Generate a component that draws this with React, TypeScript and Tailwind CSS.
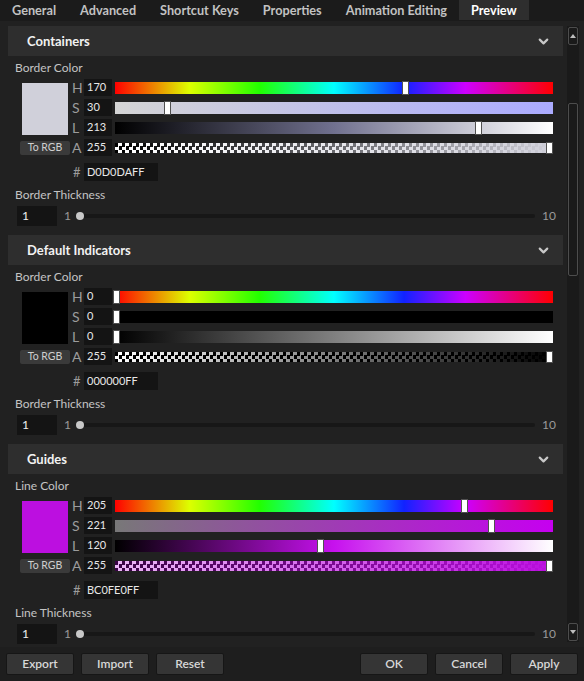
import { ChevronDown } from 'lucide-react'

type Pick = {
  h: number
  s: number
  l: number
  a: number
  hex: string
  rgb: [number, number, number]
  alphaFrom: number
}

type Section = {
  title: string
  colorLabel: string
  thicknessLabel: string
  color: Pick
}

const tabs = ['General', 'Advanced', 'Shortcut Keys', 'Properties', 'Animation Editing', 'Preview']

const sections: Section[] = [
  {
    title: 'Containers',
    colorLabel: 'Border Color',
    thicknessLabel: 'Border Thickness',
    color: { h: 170, s: 30, l: 213, a: 255, hex: 'D0D0DAFF', rgb: [208, 208, 218], alphaFrom: 0 },
  },
  {
    title: 'Default Indicators',
    colorLabel: 'Border Color',
    thicknessLabel: 'Border Thickness',
    color: { h: 0, s: 0, l: 0, a: 255, hex: '000000FF', rgb: [0, 0, 0], alphaFrom: 0 },
  },
  {
    title: 'Guides',
    colorLabel: 'Line Color',
    thicknessLabel: 'Line Thickness',
    color: { h: 205, s: 221, l: 120, a: 255, hex: 'BC0FE0FF', rgb: [188, 15, 224], alphaFrom: 0.3 },
  },
]

const deg = (v: number) => (v / 255) * 360
const pct = (v: number) => (v / 255) * 100

function Slider({ bg, value, alpha }: { bg: string; value: number; alpha?: boolean }) {
  return (
    <div className={alpha ? 'relative ml-[3px] h-[10px] flex-1' : 'relative ml-[3px] h-[12px] flex-1'}>
      {alpha ? (
        <div className="h-full w-full bg-[image:conic-gradient(#fff_25%,#000_0_50%,#fff_0_75%,#000_0)] bg-[length:7px_7px]">
          <div className="h-full w-full" style={{ background: bg }} />
        </div>
      ) : (
        <div className="h-full w-full" style={{ background: bg }} />
      )}
      <div
        className="absolute top-[-1px] bottom-[-1px] w-[7px] border border-[#505050] bg-white"
        style={{ left: `calc(-2px + ${value / 255} * (100% - 5px))` }}
      />
    </div>
  )
}

function Row({ letter, value, children }: { letter: string; value: number; children: React.ReactNode }) {
  return (
    <div className="flex h-[17px] items-center">
      <span className="w-[12px] text-[14px] leading-none text-[#9c9c9c]">{letter}</span>
      <div className="flex h-[17px] w-[28px] items-center bg-[#141414] pl-[3px] text-[11px] text-[#e8e8e8]">
        {value}
      </div>
      {children}
    </div>
  )
}

function ColorPicker({ c }: { c: Pick }) {
  const H = deg(c.h)
  const S = pct(c.s)
  const L = pct(c.l)
  const [r, g, b] = c.rgb
  const hue = 'linear-gradient(to right,#f00,#df0 17%,#2f0 33%,#0ff 50%,#12f 66%,#c0f 80%,#f00)'
  const sat = `linear-gradient(to right, hsl(${H} 0% ${L}%), hsl(${H} 100% ${L}%))`
  const lum = `linear-gradient(to right, hsl(${H} ${S}% 0%), hsl(${H} ${S}% 50%), hsl(${H} ${S}% 100%))`
  const alp = `linear-gradient(to right, rgba(${r},${g},${b},${c.alphaFrom}), rgb(${r},${g},${b}))`

  return (
    <div className="flex h-[102px] pl-[12px] pr-[10px]">
      <div className="flex w-[50px] flex-col items-center pt-[4px]">
        <div className="h-[52px] w-[46px]" style={{ background: `rgb(${r},${g},${b})` }} />
        <button className="mt-[6px] flex h-[14px] w-[50px] items-center justify-center rounded-[2px] bg-[#3a3a3a] text-[10.5px] text-[#cfcfcf]">
          To RGB
        </button>
      </div>
      <div className="ml-[2px] flex flex-1 flex-col">
        <div className="flex flex-col gap-[3px]">
          <Row letter="H" value={c.h}><Slider bg={hue} value={c.h} /></Row>
          <Row letter="S" value={c.s}><Slider bg={sat} value={c.s} /></Row>
          <Row letter="L" value={c.l}><Slider bg={lum} value={c.l} /></Row>
          <Row letter="A" value={c.a}><Slider bg={alp} value={c.a} alpha /></Row>
        </div>
        <div className="mt-[7px] flex h-[18px] items-center">
          <span className="w-[12px] pl-[1px] text-[13px] leading-none text-[#9c9c9c]">#</span>
          <div className="flex h-[18px] w-[74px] items-center bg-[#141414] pl-[3px] text-[11px] text-[#e8e8e8]">
            {c.hex}
          </div>
        </div>
      </div>
    </div>
  )
}

function Thickness() {
  return (
    <div className="flex h-[20px] items-center pl-[9px] pr-[7px] text-[12px]">
      <div className="flex h-[20px] w-[40px] items-center bg-[#141414] pl-[5px] text-[#f0f0f0]">1</div>
      <span className="ml-[7px] text-[#9a9a9a]">1</span>
      <div className="relative ml-[5px] flex h-[8px] flex-1 items-center">
        <div className="h-[4px] w-full rounded-full bg-[#171717]" />
        <div className="absolute left-0 top-0 h-[8px] w-[8px] rounded-full bg-[#c8c8c8]" />
      </div>
      <span className="ml-[7px] text-[#9a9a9a]">10</span>
    </div>
  )
}

function SectionBlock({ s }: { s: Section }) {
  return (
    <div className="pb-[9px]">
      <div className="flex h-[30px] items-center justify-between bg-[#2e2e2e] pl-[19px] pr-[12px] pt-[1px]">
        <span className="text-[13px] font-bold text-[#f2f2f2]">{s.title}</span>
        <ChevronDown size={15} strokeWidth={3.5} className="text-[#c8c8c8]" />
      </div>
      <div className="mt-[4px] h-[16px] pl-[7px] text-[12px] leading-[16px] text-[#c4c4c4]">{s.colorLabel}</div>
      <div className="mt-[3px]">
        <ColorPicker c={s.color} />
      </div>
      <div className="mt-[6px] h-[16px] pl-[7px] text-[12px] leading-[16px] text-[#c4c4c4]">{s.thicknessLabel}</div>
      <div className="mt-[3px]">
        <Thickness />
      </div>
    </div>
  )
}

function ScrollBar() {
  return (
    <div className="mb-[5px] flex w-[12px] flex-col items-center bg-[#1a1a1a] py-[1px]">
      <div className="flex h-[18px] w-[10px] items-center justify-center rounded-[2px] border border-[#4d4d4d]">
        <svg width="6" height="4" viewBox="0 0 6 4"><path d="M3 0 L6 4 L0 4 Z" fill="#bdbdbd" /></svg>
      </div>
      <div className="mt-[58px] h-[173px] w-[10px] rounded-[2px] border border-[#4d4d4d]" />
      <div className="flex-1" />
      <div className="flex h-[18px] w-[10px] items-center justify-center rounded-[2px] border border-[#4d4d4d]">
        <svg width="6" height="4" viewBox="0 0 6 4"><path d="M0 0 L6 0 L3 4 Z" fill="#bdbdbd" /></svg>
      </div>
    </div>
  )
}

function Btn({ label }: { label: string }) {
  return (
    <button className="flex h-[22px] w-[68px] items-center justify-center rounded-[2px] border border-[#161616] bg-[#353535] text-[12px] font-semibold text-[#d8d8d8]">
      {label}
    </button>
  )
}

export default function App() {
  return (
    <div className="flex h-[681px] w-[584px] flex-col overflow-hidden bg-[#212121] font-['Lato','Liberation_Sans',sans-serif]">
      <div className="flex h-[21px] bg-[#1b1b1b]">
        {tabs.map((t) => (
          <div
            key={t}
            className={
              t === 'Preview'
                ? 'flex h-[20px] items-center bg-[#2e2e2e] px-3 pt-[2px] text-[12.7px] font-bold text-white'
                : 'flex h-[20px] items-center px-3 pt-[2px] text-[12.7px] font-bold text-[#c2c2c2]'
            }
          >
            {t}
          </div>
        ))}
      </div>

      <div className="flex min-h-0 flex-1 pl-[8px] pr-[5px] pt-[5px]">
        <div className="w-[555px] overflow-hidden">
          {sections.map((s) => (
            <SectionBlock key={s.title} s={s} />
          ))}
        </div>
        <div className="ml-[4px] flex">
          <ScrollBar />
        </div>
      </div>

      <div className="flex h-[34px] items-center justify-between bg-[#1e1e1e] px-[6px]">
        <div className="flex gap-[7px]">
          <Btn label="Export" />
          <Btn label="Import" />
          <Btn label="Reset" />
        </div>
        <div className="flex gap-[7px]">
          <Btn label="OK" />
          <Btn label="Cancel" />
          <Btn label="Apply" />
        </div>
      </div>
    </div>
  )
}
